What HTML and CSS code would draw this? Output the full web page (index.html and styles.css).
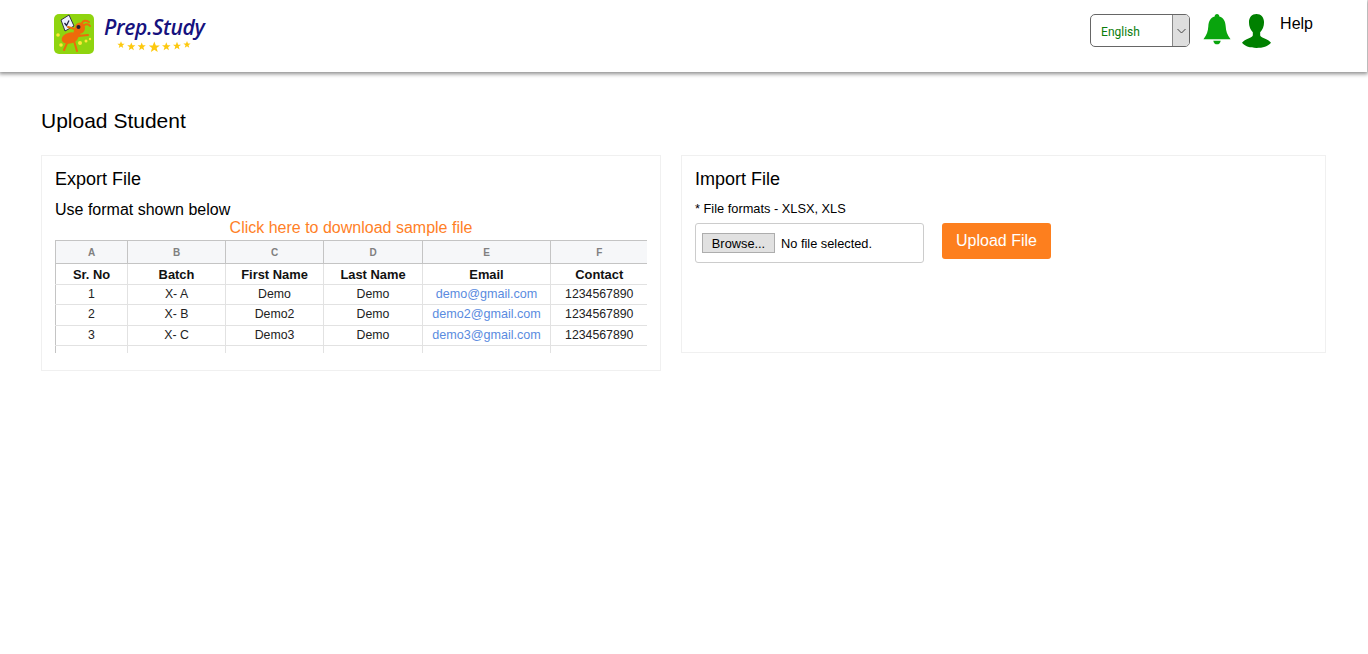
FILE: index.html
```html
<!DOCTYPE html>
<html lang="en">
<head>
<meta charset="utf-8">
<title>Upload Student</title>
<link rel="stylesheet" href="styles.css">
</head>
<body>
<header class="topbar">
  <a class="logo" href="#">
    <svg class="logo-icon" width="40" height="40" viewBox="0 0 40 40">
      <rect width="40" height="40" rx="5" fill="#8fd40f"/>
      <g fill="#ffe838"><circle cx="4" cy="21" r="1.800"/><circle cx="7" cy="31" r="1.800"/><circle cx="26" cy="29" r="2"/><circle cx="32" cy="27" r="1.500"/><circle cx="36" cy="25" r="1.200"/></g>
      <path d="M11 17 L7 6 L15 1 L20 12 Z" fill="#eef1ff" stroke="#334" stroke-width="1"/>
      <path d="M10.500 9l2 2.500 2.500-5" fill="none" stroke="#224" stroke-width="1.300"/>
      <g fill="none" stroke="#ee6a0a" stroke-width="2" stroke-linecap="round">
        <path d="M14 27 L10 36"/><path d="M20 27 L23 37"/><path d="M24 22 L34 21"/><path d="M24 16 L14 13"/><path d="M28 9 Q30 5 35 8"/><path d="M30 11 Q34 9 36 12"/>
      </g>
      <ellipse cx="16" cy="24" rx="8.500" ry="5.500" fill="#ee6a0a" transform="rotate(-15 16 24)"/>
      <ellipse cx="23" cy="19" rx="3.500" ry="4.500" fill="#ee6a0a"/>
      <ellipse cx="26" cy="14" rx="5" ry="5.500" fill="#ee6a0a"/>
      <circle cx="24.500" cy="13" r="2" fill="#223"/>
    </svg>
    <span class="logo-word">
      <span class="logo-text">Prep.Study</span>
      <svg class="logo-stars" width="106" height="16" viewBox="0 0 106 16">
        <defs>
          <polygon id="star" points="0,-1 .27,-.31 .95,-.31 .4,.13 .59,.81 0,.42 -.59,.81 -.4,.13 -.95,-.31 -.27,-.31"/>
        </defs>
        <g fill="#fdc90f">
          <use href="#star" transform="translate(19 7) scale(3.800)"/>
          <use href="#star" transform="translate(29.300 8.700) scale(4.300)"/>
          <use href="#star" transform="translate(39.700 8.700) scale(4.300)"/>
          <use href="#star" transform="translate(52.300 9.300) scale(5.800)"/>
          <use href="#star" transform="translate(64.300 8.700) scale(4.500)"/>
          <use href="#star" transform="translate(75 8) scale(4.300)"/>
          <use href="#star" transform="translate(85 6.700) scale(3.800)"/>
        </g>
      </svg>
    </span>
  </a>
  <div class="top-actions">
    <div class="lang-select">
      <span class="lang-value">English</span>
      <span class="lang-arrow">
        <svg width="9" height="6" viewBox="0 0 9 6"><path d="M.5 1l4 4 4-4" fill="none" stroke="#444" stroke-width="1"/></svg>
      </span>
    </div>
    <svg class="bell" width="28" height="31" viewBox="0 0 30 32" preserveAspectRatio="none">
      <path d="M15 0c1.500 0 2.500 1 2.500 2.600 4.500 1.200 6.500 5 6.800 10 .3 5 1.600 9 5.200 13.400H.500C4.100 21.600 5.400 17.600 5.700 12.600 6 7.600 8 3.800 12.500 2.600 12.500 1 13.500 0 15 0z" fill="#09a50d"/>
      <path d="M11 27.500h8c-.4 2.400-2 3.800-4 3.800s-3.600-1.400-4-3.800z" fill="#09a50d"/>
    </svg>
    <svg class="user" width="29" height="34" viewBox="0 0 30 34" preserveAspectRatio="none">
      <path d="M15 0c4.800 0 7.800 3.500 7.800 8.300 0 4-1.600 7.800-4 10v3c0 1.200 1.500 2 4 3 3.300 1.200 5.800 2.600 7.200 4.500C27 32.300 21.500 34 15 34S3 32.300 0 28.800c1.400-1.900 3.900-3.300 7.200-4.500 2.500-1 4-1.800 4-3v-3c-2.400-2.200-4-6-4-10C7.200 3.500 10.200 0 15 0z" fill="#008000"/>
    </svg>
    <a class="help" href="#">Help</a>
  </div>
</header>

<main class="page">
  <h1 class="page-title">Upload Student</h1>
  <div class="cards">
    <section class="card">
      <h2 class="card-title">Export File</h2>
      <p class="format-note">Use format shown below</p>
      <a class="sample-link" href="#">Click here to download sample file</a>
      <div class="sheet">
        <table class="sheet-table">
          <colgroup>
            <col class="col-a"><col class="col-b"><col class="col-c"><col class="col-d"><col class="col-e"><col class="col-f">
          </colgroup>
          <thead>
            <tr class="letters"><th>A</th><th>B</th><th>C</th><th>D</th><th>E</th><th>F</th></tr>
            <tr class="names"><th>Sr. No</th><th>Batch</th><th>First Name</th><th>Last Name</th><th>Email</th><th>Contact</th></tr>
          </thead>
          <tbody>
            <tr><td>1</td><td>X- A</td><td>Demo</td><td>Demo</td><td class="mail">demo@gmail.com</td><td>1234567890</td></tr>
            <tr><td>2</td><td>X- B</td><td>Demo2</td><td>Demo</td><td class="mail">demo2@gmail.com</td><td>1234567890</td></tr>
            <tr><td>3</td><td>X- C</td><td>Demo3</td><td>Demo</td><td class="mail">demo3@gmail.com</td><td>1234567890</td></tr>
            <tr class="empty"><td></td><td></td><td></td><td></td><td></td><td></td></tr>
          </tbody>
        </table>
      </div>
    </section>
    <section class="card card-import">
      <h2 class="card-title">Import File</h2>
      <p class="formats">* File formats - XLSX, XLS</p>
      <div class="upload-row">
        <div class="file-box">
          <button class="browse" type="button">Browse...</button>
          <span class="file-name">No file selected.</span>
        </div>
        <button class="upload-btn" type="button">Upload File</button>
      </div>
    </section>
  </div>
</main>
</body>
</html>
```

FILE: styles.css
```css
* { box-sizing: border-box; }
html, body { margin: 0; padding: 0; }
body {
  background: #fff;
  color: #000;
  font-family: "Liberation Sans", Arial, sans-serif;
  height: 654px;
  overflow: hidden;
}
a { text-decoration: none; color: inherit; }

.topbar {
  height: 72px;
  width: 1367px;
  display: flex;
  justify-content: space-between;
  align-items: flex-start;
  padding: 14px 54px 0 54px;
  background: #fff;
  box-shadow: 0 1px 4px 1px rgba(0, 0, 0, .45);
}
.logo { display: flex; gap: 8px; }
.logo-icon { display: block; }
.logo-word { display: flex; flex-direction: column; width: 106px; }
.logo-text {
  font-family: "Open Sans", sans-serif;
  font-style: italic;
  font-weight: 600;
  font-size: 21px;
  line-height: 26px;
  letter-spacing: -.3px;
  padding-left: 2px;
  color: #16127e;
  white-space: nowrap;
}
.logo-stars { display: block; margin-top: -2px; }
.top-actions { display: flex; align-items: flex-start; }
.lang-select {
  width: 100px;
  height: 33px;
  display: flex;
  justify-content: space-between;
  border: 1px solid #666;
  border-radius: 5px;
  overflow: hidden;
  background: #fff;
}
.lang-value {
  font-family: Roboto, sans-serif;
  font-size: 12px;
  line-height: 33px;
  color: #0b7d0b;
  padding: 1px 0 0 10px;
}
.lang-arrow {
  width: 17px;
  display: flex;
  align-items: center;
  justify-content: center;
  background: #dedede;
  border-left: 1px solid #888;
}
.bell { margin-left: 13px; display: block; }
.user { margin-left: 11px; display: block; }
.help { margin-left: 9px; font-size: 16px; line-height: 18px; margin-top: 1px; }

.page { padding: 37px 42px 0 41px; }
.page-title {
  margin: 0 0 22px;
  font-size: 21px;
  font-weight: 400;
  line-height: 24px;
}
.cards {
  display: grid;
  grid-template-columns: 620px 645px;
  gap: 20px;
  align-items: start;
}
.card {
  border: 1px solid #f0f0f0;
  padding: 13px 13px 17px;
}
.card-import { height: 198px; }
.card-title {
  margin: 0;
  font-size: 18px;
  font-weight: 400;
  line-height: 20px;
}
.format-note {
  margin: 12px 0 0;
  font-size: 16px;
  line-height: 18px;
}
.sample-link {
  display: block;
  text-align: center;
  font-size: 16px;
  line-height: 18px;
  color: #ff7f27;
  margin-bottom: 3px;
}
.sheet { height: 113px; overflow: hidden; }
.sheet-table {
  table-layout: fixed;
  width: 592px;
  border-collapse: collapse;
  font-size: 12.300px;
  text-align: center;
  color: #222;
}
.col-a { width: 72px; }
.col-b, .col-c { width: 98px; }
.col-d { width: 99px; }
.col-e { width: 128px; }
.col-f { width: 97px; }
.sheet-table th, .sheet-table td {
  padding: 0;
  border: 1px solid #e2e2e2;
  border-top-width: 0;
  overflow: hidden;
  white-space: nowrap;
}
.sheet-table tr > :last-child { border-right: 0; }
.letters th {
  height: 23px;
  font-size: 10px;
  color: #808080;
  background: #f6f7f9;
  border-top: 1px solid #c4c4c4;
  border-bottom: 1px solid #c4c4c4;
  border-left-color: #c4c4c4;
  border-right-color: #c4c4c4;
}
.names th { height: 21px; color: #111; font-size: 12.900px; }
.sheet-table tbody td { height: 20px; padding-bottom: 2px; }
.sheet-table tbody tr:nth-child(2) td { height: 21px; }
.sheet-table .names th:first-child,
.sheet-table td:first-child { border-left-color: #c4c4c4; }
.sheet-table .mail { color: #5a8be0; font-size: 12.600px; }
.empty td { height: 20px; }

.formats {
  margin: 12px 0 0;
  font-size: 12.800px;
  line-height: 16px;
}
.upload-row {
  display: flex;
  align-items: flex-start;
  gap: 18px;
  margin-top: 6px;
}
.file-box {
  width: 229px;
  height: 40px;
  display: flex;
  align-items: center;
  gap: 6px;
  padding-left: 6px;
  border: 1px solid #ccc;
  border-radius: 3px;
}
.browse {
  width: 73px;
  height: 20px;
  padding: 0;
  font: 12.800px "Liberation Sans", Arial, sans-serif;
  color: #000;
  background: #e1e1e1;
  border: 1px solid #adadad;
  border-radius: 0;
}
.file-name { font-size: 12.800px; }
.upload-btn {
  width: 109px;
  height: 36px;
  padding: 0;
  font: 16px "Liberation Sans", Arial, sans-serif;
  color: #fff;
  background: #fd7f1e;
  border: 0;
  border-radius: 3px;
}
```
